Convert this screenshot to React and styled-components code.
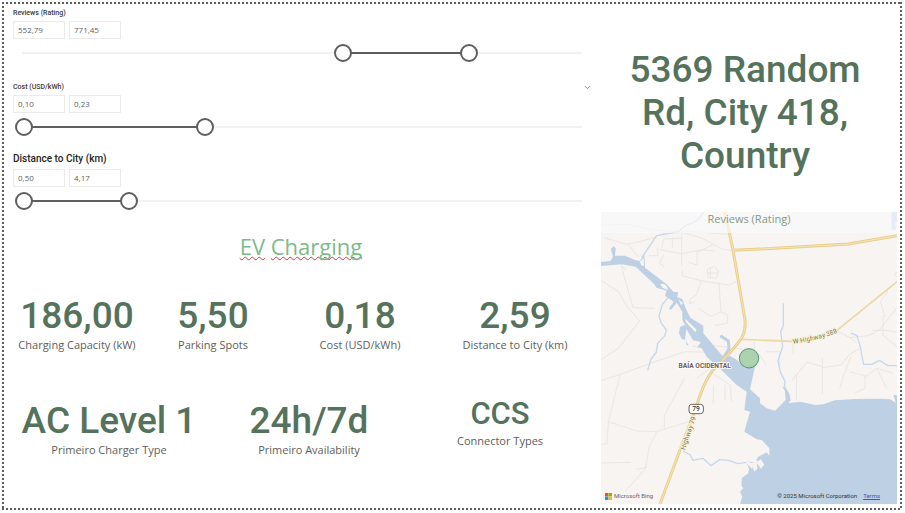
import React, { useState } from "react";
import styled, { createGlobalStyle } from "styled-components";

const GlobalStyle = createGlobalStyle`
  *, *::before, *::after { box-sizing: border-box; }
  body { margin: 0; background: #fff; }
  button, input { font: inherit; margin: 0; }
`;

const display = `Roboto, "Liberation Sans", sans-serif`;
const body = `"Open Sans", "Noto Sans", sans-serif`;
const dots = "#605e5c 0 2px, transparent 2px 4px";

const Page = styled.div`
  min-height: 100vh;
  padding: 2px 3px 3px 2px;
  display: flex;
  font-family: ${body};
  color: #605e5c;
`;

const Report = styled.main`
  flex: 1;
  display: grid;
  grid-template-columns: minmax(0, 596fr) minmax(0, 296fr);
  padding: 3px 5px 6px 3px;
  background:
    repeating-linear-gradient(90deg, ${dots}) top / 100% 2px no-repeat,
    repeating-linear-gradient(90deg, ${dots}) bottom / 100% 2px no-repeat,
    repeating-linear-gradient(180deg, ${dots}) left / 2px 100% no-repeat,
    repeating-linear-gradient(180deg, ${dots}) right / 2px 100% no-repeat;
`;

const Column = styled.div`
  display: flex;
  flex-direction: column;
  min-width: 0;
`;

const Slicers = styled.section`
  display: flex;
  flex-direction: column;
  gap: 17px;
  padding: 0 10px 10px 8px;
`;

const Slicer = styled.fieldset`
  display: flex;
  flex-direction: column;
  min-width: 0;
  margin: 0;
  border: 0;
  padding: 0;
`;

const SlicerHead = styled.div`
  display: flex;
  align-items: center;
  justify-content: space-between;
  height: 16px;
  padding-bottom: ${(p) => (p.$large ? "4px" : "0")};
`;

const SlicerTitle = styled.h2`
  margin: 0;
  font: 500 ${(p) => (p.$large ? "10px" : "7px")} / 12px ${display};
  color: ${(p) => (p.$large ? "#252423" : "#3b3a39")};
`;

const ExpandButton = styled.button`
  display: flex;
  border: 0;
  padding: 0;
  background: none;
  color: #8a8886;
`;

const Fields = styled.div`
  display: flex;
  gap: 4px;
`;

const Field = styled.input`
  width: 52px;
  height: 18px;
  padding: 0 4px 2px;
  border: 1px solid #edebe9;
  background: #fff;
  color: #605e5c;
  font: 8px / 14px ${body};
`;

const Slider = styled.div`
  position: relative;
  height: 18px;
  margin: 5px 0 0 2px;
`;

const Track = styled.div`
  position: absolute;
  inset: 8px 9px 8px 7px;
  background: #f3f2f1;
`;

const Range = styled.div`
  position: absolute;
  inset: 8px 9px;
`;

const Fill = styled.div`
  position: absolute;
  top: 0;
  height: 2px;
  background: #605e5c;
`;

const Thumb = styled.input`
  position: absolute;
  inset: 0;
  width: 100%;
  height: 18px;
  appearance: none;
  background: none;
  pointer-events: none;

  &::-webkit-slider-thumb {
    appearance: none;
    width: 18px;
    height: 18px;
    border: 2px solid #605e5c;
    border-radius: 50%;
    background: #fff;
    pointer-events: auto;
  }
`;

const Heading = styled.h1`
  margin: 10px 0 0;
  padding-right: 4px;
  text-align: center;
  font: 400 22px / 32px ${body};
  color: #7dba8b;
`;

const Misspelled = styled.span`
  text-decoration: underline wavy #e8343c 1px;
  text-decoration-skip-ink: none;
  text-underline-offset: 1px;
`;

const Cards = styled.section`
  display: grid;
  grid-template-columns: ${(p) => p.$columns};
  padding-right: ${(p) => p.$end};
  margin-top: ${(p) => p.$top};
`;

const Card = styled.article`
  display: flex;
  flex-direction: column;
  align-items: center;
  white-space: nowrap;
`;

const CardValue = styled.strong`
  font: 500 ${(p) => (p.$small ? "31px / 28px" : "37px / 42px")} ${display};
  color: #55725c;
`;

const CardLabel = styled.span`
  font-size: 11px;
  line-height: ${(p) => (p.$small ? "26px" : "16px")};
`;

const Address = styled.section`
  display: flex;
  align-items: center;
  justify-content: center;
  height: 207px;
  padding: 8px 20px 0 12px;
  text-align: center;
  font: 500 37px / 43px ${display};
  color: #55725c;
`;

const MapPanel = styled.section`
  position: relative;
  aspect-ratio: 296 / 292;
  overflow: hidden;
  background: #f7f4f2;
`;

const MapDrawing = styled.svg`
  display: block;
  width: 100%;
  height: 100%;
`;

const MapTitle = styled.h2`
  position: absolute;
  inset: 0 0 auto;
  margin: 0;
  height: 21px;
  background: rgba(250, 250, 250, 0.65);
  text-align: center;
  font: 400 11px / 14px ${body};
  color: #7f9b87;
`;

const MapFooter = styled.footer`
  position: absolute;
  inset: auto 17px 3px 4px;
  display: flex;
  align-items: center;
  font: 6px / 10px ${display};
  color: #333;
`;

const Brand = styled.span`
  display: flex;
  align-items: center;
  gap: 2px;
  flex: 1;
  color: #666;
`;

const Terms = styled.a`
  margin-left: 6px;
  color: #3d57b5;
`;

function RangeSlicer({ title, min, max, start, end, large, expandable }) {
  const [low, setLow] = useState(start);
  const [high, setHigh] = useState(end);
  const show = (n) => n.toFixed(2).replace(".", ",");
  const at = (n) => ((n - min) / (max - min)) * 100;
  const parse = (text) => Number(text.replace(",", ".")) || min;
  return (
    <Slicer aria-label={title}>
      <SlicerHead $large={large}>
        <SlicerTitle $large={large}>{title}</SlicerTitle>
        {expandable && (
          <ExpandButton type="button" aria-label="Expand">
            <svg width="7" height="7" viewBox="0 0 7 7" fill="none" stroke="currentColor">
              <path d="M1 2.2 3.5 4.7 6 2.2" />
            </svg>
          </ExpandButton>
        )}
      </SlicerHead>
      <Fields>
        <Field aria-label={`${title} minimum`} value={show(low)} onChange={(e) => setLow(parse(e.target.value))} />
        <Field aria-label={`${title} maximum`} value={show(high)} onChange={(e) => setHigh(parse(e.target.value))} />
      </Fields>
      <Slider>
        <Track />
        <Range>
          <Fill style={{ left: `${at(low)}%`, width: `${at(high) - at(low)}%` }} />
        </Range>
        <Thumb type="range" aria-label={`${title} from`} min={min} max={max} step="0.01" value={low}
          onChange={(e) => setLow(Math.min(Number(e.target.value), high))} />
        <Thumb type="range" aria-label={`${title} to`} min={min} max={max} step="0.01" value={high}
          onChange={(e) => setHigh(Math.max(Number(e.target.value), low))} />
      </Slider>
    </Slicer>
  );
}

function Kpi({ value, label, small }) {
  return (
    <Card>
      <CardValue $small={small}>{value}</CardValue>
      <CardLabel $small={small}>{label}</CardLabel>
    </Card>
  );
}

function StationMap() {
  return (
    <MapPanel aria-label="Reviews map">
      <MapDrawing viewBox="18 21 888 876" preserveAspectRatio="xMidYMid slice" fontFamily={display}>
        <g fill="none" stroke="#eae6e4" strokeWidth="3">
          <path d="M18 60 100 58 180 76 300 80 400 88M28 98 95 118 135 110 183 96M100 118l30 38M202 86l60-4 60 18 40 22 24 12 30 2" />
          <path d="M260 82v100M200 128l6-26 56-3M194 134l66 12M186 128l4 24-30 0M206 150l-12 24 14 12M232 100v28M262 146l60-12 36 4M282 172l24 8 0-38 50-24" />
          <path d="M18 226 70 260 96 304 134 348 70 430 18 464M78 180l36 128 66 2M62 160l30 36" />
          <path d="M262 196v16l60 16 80 12 22-10M318 230l-14 40-18 12-2 14 16-6M372 236l6 84-32 14-36-24M378 320l20 10v24l-38 8M336 194l22-10 12 14-6 22-24-2zM346 186v34M338 204h30" />
          <path d="M18 527 70 510 195 465 270 440 340 442M75 510 40 650 125 678 185 680 280 650M268 520 208 632v38M185 682l-22 42-12 68-60 66M18 774l90-2M40 650l-4 66-18 2M125 793l30-6M305 520l40-30 0-70 60 8M345 500l60 40 5 50M355 540v55M390 540v45" />
          <path d="M478 410v55M594 445v-30M682 458v110M682 485l-46-14-32 40 0 76M604 508l-12 18M682 488l56-8 26-32 30-18M768 455l-20 50-14 44M764 500l50 14 30-24 50 14M810 510v40l-30 14M845 490l30 60M725 378l40 20 54-6 34-16 32-42 21-26M832 376l42 0 32 6M870 335l-14-46 18-22 4-12M864 330v60l42 36M765 398l20 16" />
          <path d="M906 200q-10 8 0 16M450 440l40 5 24 35M514 440h40v45M420 430l35 4" />
        </g>
        <g fill="none" stroke="#c7d8ea" strokeWidth="4" strokeLinejoin="round">
          <path d="M325 21Q310 52 274 60L250 80 185 92 140 158M222 274l-20 24-10 35 6 20 16 22-4 16-22 24-4 26-18 24M184 442l-16 20-10 34" />
          <path d="M565 295v68l-8 16 6 46-14 42 6 32 15 30-2 18 14 25" />
          <path d="M768 384l18 8 10 34 6 34 4 18 24 0 24-12 24 16 28 0" />
          <path d="M264 738l22 12 8 16 30-6 24 22 26-18 28 2 26 10 26-4" />
        </g>
        <path fill="#bdd0e4" d="M18 171 46 168 54 156 48 132 56 124 62 130 60 152 90 152 122 166 134 168 148 150 150 188 215 238 235 260 250 262 246 276 262 282 272 310 286 338 325 362 325 385 388 460 404 452 425 464 450 488 475 480 480 485 465 553 495 580 495 595 515 610 540 617 572 585 570 558 562 545 572 548 582 565 587 585 580 595 615 590 660 600 685 598 720 586 780 582 860 581 885 583 903 593 895 571 906 570V897H435L442 875 435 860 445 850 440 844 440 820 460 805 462 790 455 775 472 793 473 773 485 770 478 772 485 792 475 790 472 776 460 770 475 772 485 790 485 763 490 755 515 742 523 753V730L500 705 485 703 448 680 465 620 448 615 455 560 425 540 385 500 335 455 330 446 320 430 275 420 272 405 260 402 252 385 255 365 270 360 262 345V320L245 293 228 315 222 310 236 290 210 272 215 257 185 248 175 235 122 185 80 178 18 183Z" />
        <path fill="#f7f4f2" d="M134 170 146 158 147 182 140 182ZM195 238q12-6 20 5l4 12-16-6ZM274 372l20 34 24 5-10 14-26-2-12-20ZM271 341l34 33-4 8-28-30ZM250 283l14 12-6 6ZM467 775l15-5 6 20-10 10-6-16ZM483 771l15-8 10 16-10 12Z" />
        <path fill="none" stroke="#bdd0e4" strokeWidth="9" strokeLinejoin="round" d="M376 392l24 16 2 24-16 24" />
        <path fill="#bdd0e4" d="M889 21h17v30l-6 2 4 20-14 3Z" />
        <g fill="none" strokeLinejoin="round">
          <path stroke="#ecd9a2" strokeWidth="5" d="M438 403 590 409Q680 402 725 377L906 230" />
          <path stroke="#e9ce8c" strokeWidth="9" d="M390 21 414 135 450 345Q453 378 438 403L402 446 350 500Q322 540 303 610L255 735 195 897M414 136 480 133 760 117 906 92" />
          <path stroke="#f6e5b8" strokeWidth="3" d="M390 21 414 135 450 345Q453 378 438 403L402 446 350 500Q322 540 303 610L255 735 195 897M414 136 480 133 760 117 906 92" />
        </g>
        <path id="west-road" fill="none" d="M594 416Q672 407 736 379" />
        <path id="north-road" fill="none" d="M269 736 304 634" />
        <g fontSize="20" fill="#77746b" stroke="#f8f2cf" strokeWidth="6" paintOrder="stroke">
          <text><textPath href="#west-road">W Highway 388</textPath></text>
          <text><textPath href="#north-road">Highway 79</textPath></text>
        </g>
        <rect x="282" y="598" width="43" height="28" rx="8" fill="#fff" stroke="#66625f" strokeWidth="3" />
        <text x="303" y="619" fontSize="20" fontWeight="500" textAnchor="middle" fill="#333">79</text>
        <text x="329" y="488" fontSize="20" fontWeight="700" textAnchor="middle" fill="#705a52" stroke="#fff" strokeWidth="4" paintOrder="stroke">BAÍA OCIDENTAL</text>
        <circle cx="462" cy="460" r="29" fill="#9dcca5" fillOpacity=".85" stroke="#599468" strokeWidth="3" />
      </MapDrawing>
      <MapTitle>Reviews (Rating)</MapTitle>
      <MapFooter>
        <Brand>
          <svg width="7" height="7" viewBox="0 0 7 7" aria-hidden="true">
            <path fill="#f25022" d="M0 0h3.4v3.4H0z" />
            <path fill="#7fba00" d="M3.6 0H7v3.4H3.6z" />
            <path fill="#00a4ef" d="M0 3.6h3.4V7H0z" />
            <path fill="#ffb900" d="M3.6 3.6H7V7H3.6z" />
          </svg>
          Microsoft Bing
        </Brand>
        <span>© 2025 Microsoft Corporation</span>
        <Terms href="#terms">Terms</Terms>
      </MapFooter>
    </MapPanel>
  );
}

export default function App() {
  return (
    <>
      <GlobalStyle />
      <Page>
        <Report>
          <Column>
            <Slicers>
              <RangeSlicer title="Reviews (Rating)" min={0} max={968} start={552.79} end={771.45} />
              <RangeSlicer title="Cost (USD/kWh)" min={0.1} max={0.5} start={0.1} end={0.23} expandable />
              <RangeSlicer title="Distance to City (km)" min={0.5} max={20} start={0.5} end={4.17} large />
            </Slicers>
            <Heading>
              <Misspelled>EV</Misspelled> <Misspelled>Charging</Misspelled>
            </Heading>
            <Cards $columns="144fr 128fr 166fr 144fr" $end="14px" $top="33px">
              <Kpi value="186,00" label="Charging Capacity (kW)" />
              <Kpi value="5,50" label="Parking Spots" />
              <Kpi value="0,18" label="Cost (USD/kWh)" />
              <Kpi value="2,59" label="Distance to City (km)" />
            </Cards>
            <Cards $columns="208fr 192fr 190fr" $end="6px" $top="47px">
              <Kpi value="AC Level 1" label="Primeiro Charger Type" />
              <Kpi value="24h/7d" label="Primeiro Availability" />
              <Kpi value="CCS" label="Connector Types" small />
            </Cards>
          </Column>
          <Column>
            <Address>5369 Random Rd, City 418, Country</Address>
            <StationMap />
          </Column>
        </Report>
      </Page>
    </>
  );
}
